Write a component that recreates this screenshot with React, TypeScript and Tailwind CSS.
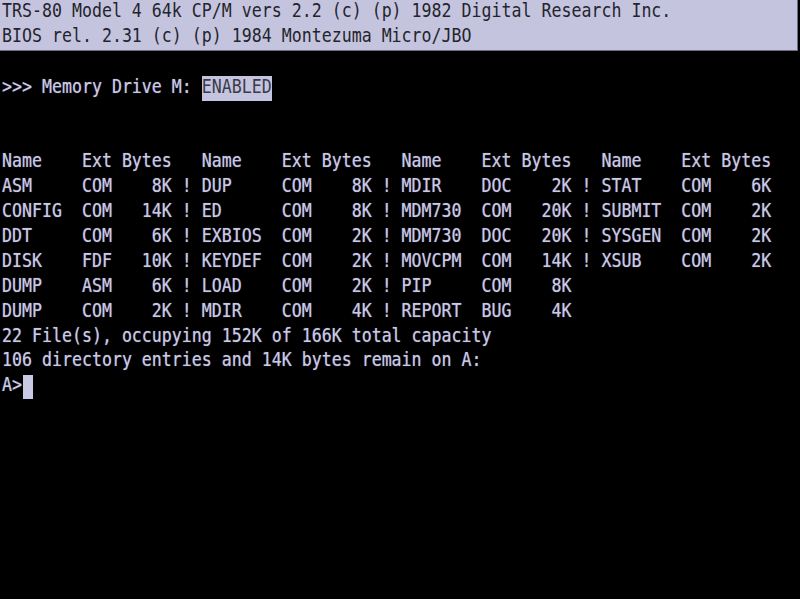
const rows = [
  "ASM     COM    8K ! DUP     COM    8K ! MDIR    DOC    2K ! STAT    COM    6K",
  "CONFIG  COM   14K ! ED      COM    8K ! MDM730  COM   20K ! SUBMIT  COM    2K",
  "DDT     COM    6K ! EXBIOS  COM    2K ! MDM730  DOC   20K ! SYSGEN  COM    2K",
  "DISK    FDF   10K ! KEYDEF  COM    2K ! MOVCPM  COM   14K ! XSUB    COM    2K",
  "DUMP    ASM    6K ! LOAD    COM    2K ! PIP     COM    8K",
  "DUMP    COM    2K ! MDIR    COM    4K ! REPORT  BUG    4K",
];

function Line({ children }: { children?: React.ReactNode }) {
  return <div className="flex h-[24.9px] items-center whitespace-pre">{children}</div>;
}

function T({ children }: { children: string }) {
  return <span className="inline-block origin-center -translate-y-[1.5px] scale-y-[1.22]">{children}</span>;
}

export default function App() {
  return (
    <div
      className="h-[599px] w-[800px] overflow-hidden bg-black pl-[2px] text-[16.6px] text-[#c9c9e6] [text-shadow:0_0_1px_rgba(200,200,240,0.6)]"
      style={{ fontFamily: '"DejaVu Sans Mono", "Liberation Mono", monospace' }}
    >
      <div className="-ml-[2px] w-[798px] border-r border-b border-[#6a6a80] bg-[#c4c4df] pl-[2px] text-[#24242c] [text-shadow:none]">
        <Line>
          <T>TRS-80 Model 4 64k CP/M vers 2.2 (c) (p) 1982 Digital Research Inc.</T>
        </Line>
        <Line>
          <T>BIOS rel. 2.31 (c) (p) 1984 Montezuma Micro/JBO</T>
        </Line>
      </div>
      <Line />
      <Line>
        <T>{">>> Memory Drive M: "}</T>
        <span className="flex h-full items-center bg-[#c4c4df] text-[#3a3a48] [text-shadow:none]">
          <T>ENABLED</T>
        </span>
      </Line>
      <Line />
      <Line />
      <Line>
        <T>Name    Ext Bytes   Name    Ext Bytes   Name    Ext Bytes   Name    Ext Bytes</T>
      </Line>
      {rows.map((r, i) => (
        <Line key={i}>
          <T>{r}</T>
        </Line>
      ))}
      <Line>
        <T>22 File(s), occupying 152K of 166K total capacity</T>
      </Line>
      <Line>
        <T>106 directory entries and 14K bytes remain on A:</T>
      </Line>
      <Line>
        <T>A&gt;</T>
        <span className="ml-[1px] h-[24px] w-[10px] bg-[#c9c9e6]" />
      </Line>
    </div>
  );
}
